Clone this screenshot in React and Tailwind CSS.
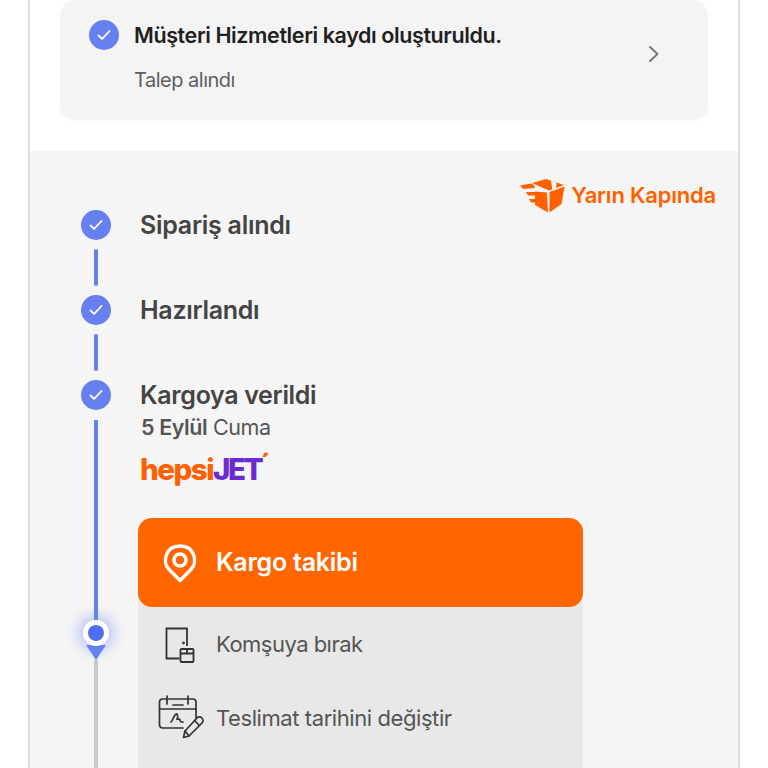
import React from 'react';

const CheckCircle = () => (
    <div className="w-[30px] h-[30px] rounded-full bg-[#6680f0] flex items-center justify-center shrink-0">
        <svg width="18" height="18" viewBox="0 0 18 18" fill="none">
            <path d="M3.5 9.5l3.6 3.4L14.5 5" stroke="#fff" strokeWidth="1.8" strokeLinecap="round" strokeLinejoin="round" />
        </svg>
    </div>
);

const Connector = () => <div className="w-[4px] h-[37px] my-[9px] rounded-full bg-[#6680f0]" />;

const BoxIcon = () => (
    <svg width="46" height="35" viewBox="0 0 46 35" fill="none">
        <path d="M13 5L27 1L45 7L30 12.5Z" fill="#ff6000" />
        <path d="M30.5 14L45.5 8.5L42.5 26L30.5 34.5Z" fill="#ff6000" />
        <path d="M16 13.5L28 14.5L29 34.5L16 27Z" fill="#ff6000" />
        <path d="M1 7.5L12 5.5L15 7L16 10L4 11Z" fill="#ff6000" />
        <path d="M7 14L16 14V17.5L9 17.5Z" fill="#ff6000" />
        <path d="M10 21L16 21V24.5L12 24.5Z" fill="#ff6000" />
        <path d="M32 2.5L37.5 4.5L37 11.5L33.5 13Z" fill="#f5f5f5" />
    </svg>
);

const PinIcon = () => (
    <svg width="36" height="40" viewBox="0 0 36 40" fill="none">
        <path d="M18 37.5L6.8 26.2C0.5 19.8 2.5 3 18 3s17.5 16.8 11.2 23.2Z" stroke="#fff" strokeWidth="3.4" strokeLinejoin="round" />
        <circle cx="18" cy="17" r="6" stroke="#fff" strokeWidth="3.4" />
    </svg>
);

const DoorIcon = () => (
    <svg width="30" height="36" viewBox="0 0 30 36" fill="none" stroke="#333" strokeWidth="1.8">
        <path d="M22 19V1.5H1.5v30h13" />
        <circle cx="18.5" cy="16" r="0.5" fill="#333" />
        <rect x="15.5" y="22" width="13" height="13" rx="1" />
        <path d="M15.5 26.5h13M22 22v5" />
    </svg>
);

const CalendarIcon = () => (
    <svg width="46" height="46" viewBox="0 0 46 46" fill="none" stroke="#333" strokeWidth="1.7" strokeLinecap="round" strokeLinejoin="round">
        <path d="M25 33H4.5a3 3 0 0 1-3-3V7a3 3 0 0 1 3-3H35a3 3 0 0 1 3 3v16" />
        <path d="M1.5 14h36.5M9 1v8M30 1v8M15 10h10" />
        <path d="M13 27c2-1 2-6 5-8 2-1 2 4 1 5s3-1 3 1 1 2 3 2" />
        <path d="M25.5 42.5l1.5-6.5 12-13a3.5 3.5 0 0 1 5 5L31 41Z" />
        <path d="M36.5 25.5l5 5M27 36l4 5" />
    </svg>
);

const App = () => {
    return (
        <div className="h-[768px] overflow-hidden bg-white px-[28px] font-['Inter',sans-serif]">
            <div className="h-full border-x-2 border-[#dcdcdc]">
                <div className="px-[30px] h-[151px]">
                    <div className="h-[120px] bg-[#f4f4f4] rounded-[16px] shadow-[0_1px_3px_rgba(0,0,0,0.03)] flex items-center pl-[29px] pr-[48px]">
                        <div className="flex-1 self-start">
                            <div className="flex items-center gap-[15px] mt-[19px]">
                                <CheckCircle />
                                <span className="text-[21.5px] font-semibold tracking-[-0.4px] text-[#1f1f1f]">
                                    Müşteri Hizmetleri kaydı oluşturuldu.
                                </span>
                            </div>
                            <p className="ml-[45px] mt-[14px] text-[20px] tracking-[-0.5px] text-[#5f5f5f]">Talep alındı</p>
                        </div>
                        <svg className="mb-[12px]" width="12" height="18" viewBox="0 0 12 18" fill="none">
                            <path d="M2 2l7.5 7L2 16" stroke="#777" strokeWidth="2" strokeLinecap="round" strokeLinejoin="round" />
                        </svg>
                    </div>
                </div>

                <div className="relative h-full bg-[#f5f5f5] pl-[51px] pt-[59px]">
                    <div className="absolute right-[22px] top-[27px] flex items-center gap-[6px]">
                        <BoxIcon />
                        <span className="text-[22px] font-semibold tracking-[-0.2px] text-[#ff6000]">Yarın Kapında</span>
                    </div>

                    <div className="flex">
                        <div className="w-[30px] flex flex-col items-center shrink-0">
                            <CheckCircle />
                            <Connector />
                            <CheckCircle />
                            <Connector />
                            <CheckCircle />
                            <div className="w-[4px] h-[204px] mt-[10px] -mb-[4px] bg-[#6680f0]" />
                            <div className="relative z-10 w-[26px] h-[26px] rounded-full bg-white flex items-center justify-center shadow-[0_0_12px_6px_rgba(102,128,240,0.35)]">
                                <div className="w-[16px] h-[16px] rounded-full bg-[#4f6df0]" />
                            </div>
                            <div className="w-0 h-0 -mt-[1px] border-x-[10px] border-x-transparent border-t-[15px] border-t-[#6680f0]" />
                            <div className="w-[4px] h-[120px] bg-[#c9c9c9]" />
                        </div>

                        <div className="ml-[27px] flex-1">
                            <div className="h-[85px] pl-[2px] text-[25px] leading-[30px] font-semibold tracking-[-0.27px] text-[#444]">Sipariş alındı</div>
                            <div className="h-[85px] pl-[2px] text-[25px] leading-[30px] font-semibold tracking-[-0.3px] text-[#444]">Hazırlandı</div>
                            <div className="pl-[2px] text-[25px] leading-[30px] font-semibold tracking-[-0.33px] text-[#444]">Kargoya verildi</div>
                            <p className="pl-[3px] mt-[3px] text-[21.5px] leading-[28px] tracking-[-0.4px] text-[#555]">
                                <span className="font-semibold">5 Eylül</span> Cuma
                            </p>
                            <div className="pl-[2px] mt-[11px] h-[66px] flex items-start text-[29.5px] leading-[34px] font-extrabold tracking-[-1.5px]">
                                <span className="text-[#ff6000]">hepsi</span>
                                <span className="text-[#6a2bd0] tracking-[-2.4px]">JET</span>
                                <span className="-ml-[1px] text-[#ff6000] text-[28px] leading-[24px]">´</span>
                            </div>

                            <div className="w-[445px] bg-[#e8e8e8] rounded-t-[14px] h-[400px]">
                                <div className="h-[89px] bg-[#ff6600] rounded-[14px] flex items-center pl-[24px] gap-[18px]">
                                    <PinIcon />
                                    <span className="text-[25px] font-semibold tracking-[-0.25px] text-white">Kargo takibi</span>
                                </div>
                                <div className="h-[75px] flex items-center">
                                    <div className="w-[78px] pl-[27px]"><DoorIcon /></div>
                                    <span className="text-[22px] tracking-[-0.52px] text-[#555]">Komşuya bırak</span>
                                </div>
                                <div className="h-[72px] flex items-center">
                                    <div className="w-[78px] pl-[20px]"><CalendarIcon /></div>
                                    <span className="text-[22px] tracking-[-0.42px] text-[#555]">Teslimat tarihini değiştir</span>
                                </div>
                            </div>
                        </div>
                    </div>
                </div>
            </div>
        </div>
    );
};

export default App;
